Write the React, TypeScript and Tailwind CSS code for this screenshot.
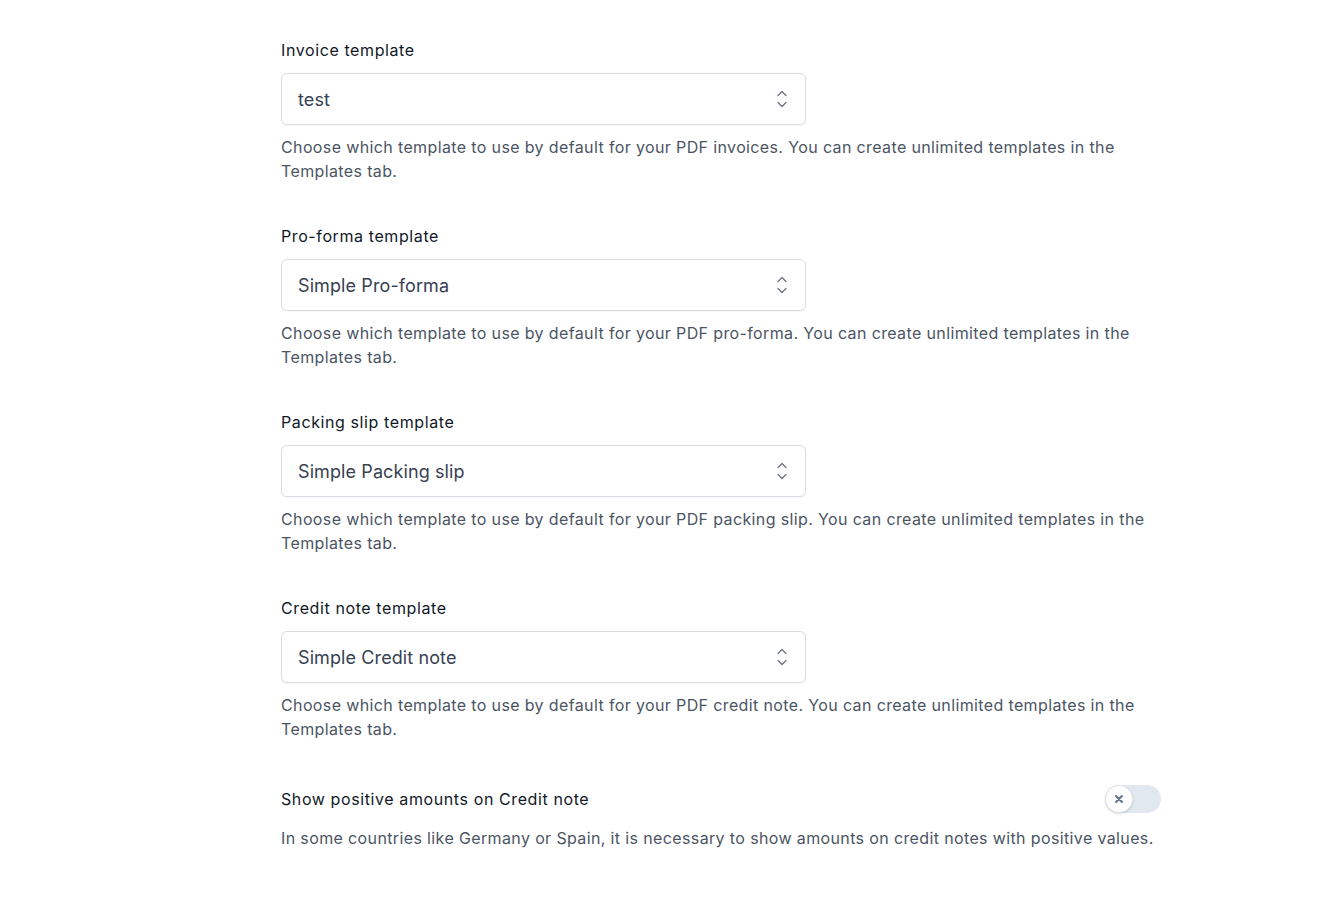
import React from "react";

type Section = {
  label: string;
  value: string;
  help: string;
};

const sections: Section[] = [
  {
    label: "Invoice template",
    value: "test",
    help: "Choose which template to use by default for your PDF invoices. You can create unlimited templates in the Templates tab.",
  },
  {
    label: "Pro-forma template",
    value: "Simple Pro-forma",
    help: "Choose which template to use by default for your PDF pro-forma. You can create unlimited templates in the Templates tab.",
  },
  {
    label: "Packing slip template",
    value: "Simple Packing slip",
    help: "Choose which template to use by default for your PDF packing slip. You can create unlimited templates in the Templates tab.",
  },
  {
    label: "Credit note template",
    value: "Simple Credit note",
    help: "Choose which template to use by default for your PDF credit note. You can create unlimited templates in the Templates tab.",
  },
];

function SelectorIcon() {
  return (
    <svg width="14" height="22" viewBox="0 0 14 22" fill="none" stroke="#6b7280" strokeWidth="1.3" strokeLinecap="round" strokeLinejoin="round">
      <path d="M3 7.5 7 3.5l4 4" />
      <path d="M3 14.5 7 18.5l4-4" />
    </svg>
  );
}

function TemplateSelect({ label, value, help }: Section) {
  return (
    <div className="flex flex-col">
      <label className="text-[16px] leading-6 font-normal tracking-[0.6px] text-[#111827]">{label}</label>
      <button className="mt-[11px] flex h-[52px] w-[525px] items-center justify-between rounded-md border border-[#d9dde3] bg-white pl-4 pr-4 text-left shadow-[0_1px_2px_rgba(0,0,0,0.04)]">
        <span className="text-[18px] font-normal tracking-[0.1px] text-[#374151]">{value}</span>
        <SelectorIcon />
      </button>
      <p className="mt-[10px] text-[16px] leading-6 tracking-[0.37px] text-[#4b5563]">{help}</p>
    </div>
  );
}

function Toggle() {
  return (
    <div className="relative h-7 w-14 rounded-full bg-[#e2e8f0]">
      <div className="absolute left-0 top-0 flex h-7 w-7 items-center justify-center rounded-full border border-[#e5e7eb] bg-white shadow">
        <svg width="10" height="10" viewBox="0 0 10 10" stroke="#64748b" strokeWidth="2" strokeLinecap="round">
          <path d="M2 2l6 6M8 2 2 8" />
        </svg>
      </div>
    </div>
  );
}

export default function App() {
  return (
    <div className="min-h-screen bg-white font-['Inter',sans-serif]">
      <div className="ml-[281px] w-[880px] pt-[38px]">
        <div className="flex flex-col gap-[41px]">
          {sections.map((s) => (
            <TemplateSelect key={s.label} {...s} />
          ))}
        </div>
        <div className="mt-[44px] flex items-center justify-between">
          <span className="text-[16px] leading-6 font-normal tracking-[0.6px] text-[#111827]">Show positive amounts on Credit note</span>
          <Toggle />
        </div>
        <p className="mt-[13px] text-[16px] leading-6 tracking-[0.37px] text-[#4b5563]">
          In some countries like Germany or Spain, it is necessary to show amounts on credit notes with positive values.
        </p>
      </div>
    </div>
  );
}
